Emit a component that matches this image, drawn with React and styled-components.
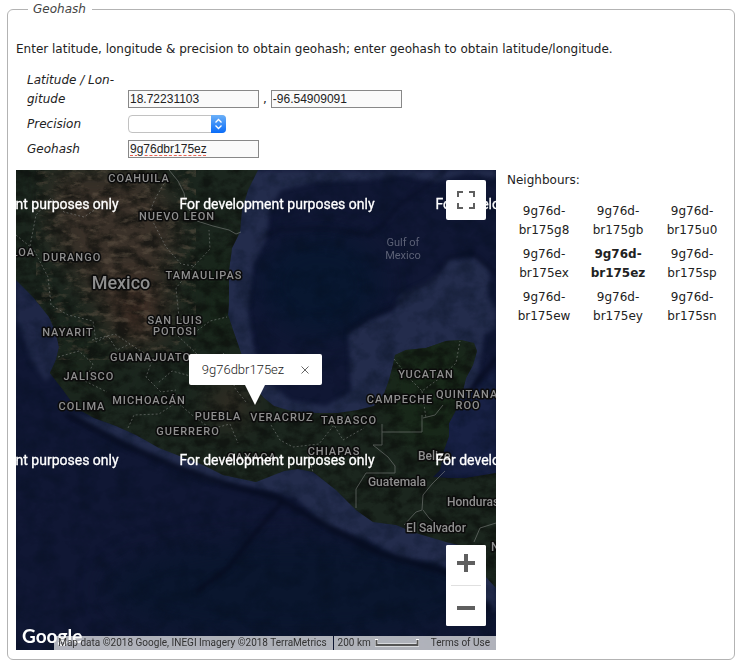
import React from 'react';
import styled, { createGlobalStyle } from 'styled-components';

const GlobalStyle = createGlobalStyle`
  * { box-sizing: border-box; }
  body {
    margin: 0;
    background: #fff;
    color: #222;
    font: 12px/19px Verdana, "DejaVu Sans", sans-serif;
  }
`;

const Page = styled.main`
  padding: 0 10px 6px 7px;
`;

const Panel = styled.fieldset`
  margin: 0;
  min-width: 0;
  border: 1px solid #b3b3b3;
  border-radius: 6px;
  padding: 21px 5px 9px 8px;
`;

const Legend = styled.legend`
  margin-left: 12px;
  padding: 0 6px 0 5px;
  font-style: italic;
  color: #444;
`;

const Intro = styled.p`
  margin: 0 0 12px;
`;

const Form = styled.form`
  display: grid;
  grid-template-columns: 90px 1fr;
  column-gap: 11px;
  row-gap: 6px;
  align-items: end;
  padding-left: 11px;
  margin-bottom: 11px;
`;

const Label = styled.label`
  font-style: italic;
`;

const Controls = styled.div`
  display: flex;
  align-items: flex-start;
  gap: 4px;
  height: 19px;
`;

const TextBox = styled.input`
  width: 131px;
  height: 18px;
  padding: 0 1px;
  border: 1px solid #888;
  border-radius: 0;
  background: #fafafa;
  color: #222;
  font: 12px "Liberation Sans", Arial, sans-serif;
  text-decoration: ${(p) => (p.$misspelt ? 'underline dashed #e8604f 1px' : 'none')};
  text-underline-offset: 2px;
`;

const SelectWrap = styled.span`
  position: relative;
  display: flex;
`;

const Select = styled.select`
  appearance: none;
  width: 98px;
  height: 18px;
  padding: 0 18px 0 6px;
  border: 1px solid #c2c2c2;
  border-radius: 4px;
  background: #fff;
  font: 11px "Liberation Sans", Arial, sans-serif;
`;

const Stepper = styled.span`
  position: absolute;
  top: 0;
  right: 0;
  display: grid;
  place-items: center;
  width: 15px;
  height: 18px;
  border-radius: 0 4px 4px 0;
  background: linear-gradient(#6bb0f8, #0a6cf8);
  pointer-events: none;
`;

const Results = styled.div`
  display: flex;
  align-items: flex-start;
  gap: 11px;
`;

const MapFrame = styled.section`
  position: relative;
  flex: 0 1 480px;
  min-width: 0;
  aspect-ratio: 1;
  overflow: hidden;
  background: #0d1634;
  font-family: Roboto, sans-serif;
`;

const MapDrawing = styled.svg`
  display: block;
  width: 100%;
  height: 100%;
  text {
    font-family: Roboto, sans-serif;
  }
`;

const StateText = styled.text`
  font-size: 11px;
  font-weight: 500;
  letter-spacing: 1px;
  fill: #8f8f8f;
  stroke: #0b0b0b;
  stroke-width: 3px;
  stroke-linejoin: round;
  paint-order: stroke;
  text-anchor: ${(p) => p.$anchor || 'middle'};
`;

const CountryText = styled(StateText)`
  font-size: ${(p) => (p.$large ? 18 : 12)}px;
  letter-spacing: normal;
`;

const SeaText = styled.text`
  font-size: 11px;
  fill: #5b6075;
  text-anchor: middle;
`;

const NoticeText = styled.text`
  font-size: 14px;
  fill: #fff;
  stroke: #fff;
  stroke-width: 0.3px;
  text-anchor: middle;
`;

const MapButton = styled.button`
  display: grid;
  place-items: center;
  width: 40px;
  height: 40px;
  padding: 0;
  border: 0;
  border-radius: 2px;
  background: #fff;
`;

const ZoomInButton = styled(MapButton)`
  padding-bottom: 4px;
`;

const ZoomOutButton = styled(MapButton)`
  padding-top: 4px;
`;

const FullscreenButton = styled(MapButton)`
  position: absolute;
  top: 10px;
  right: 10px;
`;

const Zoom = styled.div`
  position: absolute;
  right: 10px;
  bottom: 24px;
  display: flex;
  flex-direction: column;
  align-items: center;
  border-radius: 2px;
  background: #fff;
`;

const ZoomRule = styled.span`
  width: 30px;
  height: 1px;
  background: #e0e0e0;
`;

const Callout = styled.div`
  position: absolute;
  left: 36%;
  bottom: 51%;
  transform: translateY(-20px);
  display: flex;
  align-items: center;
  gap: 9px;
  height: 31px;
  padding: 0 5px 0 13px;
  border-radius: 2px;
  background: #fff;
  color: #222;
  font-size: 13px;
  font-weight: 300;

  &::after {
    content: '';
    position: absolute;
    top: 100%;
    left: 50%;
    margin-left: -10px;
    border: 10px solid transparent;
    border-top: 20px solid #fff;
    border-bottom: 0;
  }
`;

const CloseButton = styled.button`
  display: grid;
  place-items: center;
  width: 24px;
  height: 24px;
  padding: 0;
  border: 0;
  background: none;
`;

const Brand = styled.a`
  position: absolute;
  left: 6px;
  bottom: 3px;
  color: #fff;
  font: 700 19px/22px Lato, sans-serif;
  text-decoration: none;
`;

const Credits = styled.div`
  position: absolute;
  right: 0;
  bottom: 0;
  display: flex;
  gap: 1px;
  height: 14px;
  color: #333;
  font-size: 10px;
  line-height: 14px;
  white-space: nowrap;
`;

const Credit = styled.div`
  display: flex;
  align-items: center;
  gap: 4px;
  padding: 0 6px 0 4px;
  background: rgba(245, 245, 245, 0.7);
`;

const TermsLink = styled.a`
  margin-left: 8px;
  color: #333;
  text-decoration: none;
`;

const Neighbours = styled.section`
  flex: 1;
  padding-top: 1px;
`;

const Heading = styled.p`
  margin: 0;
`;

const HashTable = styled.table`
  width: 100%;
  max-width: 222px;
  margin-top: 10px;
  border-collapse: collapse;
  table-layout: fixed;
`;

const HashCell = styled.td`
  padding: 2px 0 3px;
  line-height: 19px;
  text-align: center;
  font-weight: ${(p) => (p.$current ? 700 : 400)};
`;

const states = [
  ['COAHUILA', 123, 12], ['NUEVO LEON', 161, 50], ['SINALOA', 19, 86, 'end'],
  ['DURANGO', 56, 91], ['TAMAULIPAS', 188, 109], ['SAN LUIS', 159, 154],
  ['POTOSI', 159, 165], ['NAYARIT', 52, 166], ['GUANAJUATO', 94, 191, 'start'],
  ['JALISCO', 73, 210], ['MICHOACÁN', 133, 234], ['COLIMA', 66, 240],
  ['YUCATAN', 410, 208], ['CAMPECHE', 384, 233], ['QUINTANA', 420, 228, 'start'],
  ['ROO', 452, 239], ['PUEBLA', 202, 250], ['VERACRUZ', 266, 251],
  ['TABASCO', 333, 254], ['GUERRERO', 172, 265], ['OAXACA', 236, 291],
  ['CHIAPAS', 318, 285],
];

const countries = [
  ['Mexico', 105, 119, 'middle', true], ['Belize', 402, 290, 'start'],
  ['Guatemala', 381, 316, 'middle'], ['Honduras', 431, 336, 'start'],
  ['El Salvador', 420, 362, 'middle'], ['Nicaragua', 475, 381, 'start'],
];

const notices = [39, 295].flatMap((y) => [5, 261, 517].map((x) => [x, y]));

const LAND =
  'M0 0H242L232 20 226 40 224 62 216 78 213 100 213 130 212 145 217 160 224 180 232 203 241 220 248 228 258 236 275 241 300 243 322 243 342 240 358 236 368 224 373 210 377 195 379 185 390 180 410 178 430 171 445 170 458 173 461 181 457 195 450 208 446 224 440 240 433 253 433 266 428 280 424 300 417 307 432 308 450 308 480 303V418L470 407 460 392 447 376 430 372 400 363 380 355 357 352 340 340 320 320 297 302 282 299 268 301 240 312 207 305 187 295 143 278 120 265 100 256 78 248 60 238 47 220 34 203 40 190 43 177 40 163 33 147 17 127 0 110Z';

const HASHES = [
  ['g8', 'gb', 'u0'],
  ['ex', 'ez', 'sp'],
  ['ew', 'ey', 'sn'],
];

function SatelliteMap() {
  return (
    <MapDrawing viewBox="0 0 480 480" role="img" aria-label="Satellite map of Mexico">
      <defs>
        <clipPath id="land"><path d={LAND} /></clipPath>
        <filter id="soft" x="-50%" y="-50%" width="200%" height="200%" colorInterpolationFilters="sRGB">
          <feGaussianBlur stdDeviation="14" />
        </filter>
        <filter id="edge" x="-10%" y="-10%" width="120%" height="120%" colorInterpolationFilters="sRGB">
          <feGaussianBlur stdDeviation="2" />
        </filter>
        <filter id="terrain" x="0" y="0" width="100%" height="100%" colorInterpolationFilters="sRGB">
          <feTurbulence type="fractalNoise" baseFrequency="0.07 0.09" numOctaves="5" seed="8" />
          <feColorMatrix values="0 0 0 0 0.04  0 0 0 0 0.05  0 0 0 0 0.04  3 0 0 0 -1.2" />
        </filter>
        <filter id="ridges" x="0" y="0" width="100%" height="100%" colorInterpolationFilters="sRGB">
          <feTurbulence type="fractalNoise" baseFrequency="0.08 0.17" numOctaves="5" seed="21" />
          <feColorMatrix values="0 0 0 0 0.4  0 0 0 0 0.35  0 0 0 0 0.29  0 4 0 0 -2.1" />
        </filter>
        <filter id="seabed" x="0" y="0" width="100%" height="100%" colorInterpolationFilters="sRGB">
          <feTurbulence type="fractalNoise" baseFrequency="0.05 0.06" numOctaves="5" seed="4" />
          <feColorMatrix values="0 0 0 0 0.02  0 0 0 0 0.06  0 0 0 0 0.12  2.4 0 0 0 -1" />
        </filter>
      </defs>

      <rect width="480" height="480" fill="#101734" />
      <ellipse cx="305" cy="115" rx="60" ry="50" fill="#081730" filter="url(#soft)" />
      <ellipse cx="280" cy="420" rx="190" ry="50" fill="#0a162e" filter="url(#soft)" />
      <g filter="url(#edge)" fill="#232c4c">
        <path d="M235 0H480V8L450 3 420 12 385 5 350 10 300 12 265 20 254 38 250 70 237 95 232 140 238 180 250 210 275 231 310 236 335 222 334 190 332 163 352 151 378 141 384 124 408 114 424 102 432 90 460 88 474 101 472 125 480 140V158L468 165 462 205 440 245H255L205 180V40Z" />
        <path d="M0 105 18 120 45 155 50 180 30 212 15 190 5 160 0 150Z" opacity=".8" />
        <path d="M50 242 95 251 145 274 190 291 235 306 280 295 325 315 365 344 430 366 470 400 480 412V445L450 410 420 393 385 388 350 369 310 356 280 328 240 318 195 311 145 290 100 269Z" />
        <path d="M432 245 480 200V305L424 307Z" fill="#182145" />
      </g>
      <rect width="480" height="480" filter="url(#seabed)" opacity=".4" />
      <g fill="none" stroke="#060b1e" filter="url(#edge)">
        <path d="M50 244 105 273 160 297 215 316 260 327 310 356 365 384 430 402 475 440" strokeWidth="6" opacity=".75" />
        <path d="M240 72 260 60 310 58 350 65 365 57 382 36 405 20 430 0M332 162 352 148 380 135 398 119 418 110 432 88 455 82 480 103" strokeWidth="3" opacity=".55" />
        <path d="M266 332 239 363 212 398 180 422M480 188 460 213 445 237" strokeWidth="3" />
      </g>

      <path d={LAND} fill="#1b261e" />
      <g clipPath="url(#land)">
        <g filter="url(#soft)">
          <path d="M35 0H135L165 60 150 100 155 165 125 178 80 135 35 65Z" fill="#3a3129" />
          <ellipse cx="118" cy="140" rx="24" ry="34" fill="#3c2c24" />
          <ellipse cx="214" cy="234" rx="20" ry="24" fill="#332d24" />
          <ellipse cx="60" cy="196" rx="40" ry="22" fill="#1b261c" />
          <ellipse cx="415" cy="220" rx="45" ry="65" fill="#182819" />
          <ellipse cx="203" cy="130" rx="22" ry="60" fill="#18261a" />
        </g>
        <rect width="480" height="480" filter="url(#terrain)" opacity=".6" />
        <path d="M20 0H155L180 100 170 190H110L40 140Z" filter="url(#ridges)" opacity=".45" />
      </g>
      <g fill="none" stroke="#8c8f8d" strokeWidth="1" opacity=".5">
        <path d="M153 0 162 11 168 23 170 35 181 51 197 56 213 60 220 64 225 62M366 254V262H406V245M366 262V275H357L372 287 379 296 379 303H350L340 319V338M429 301 416 314 407 325 406 340 400 342 388 355M407 340 413 348 423 356 443 363M407 248 419 245 427 235M480 353 464 358 458 372" />
        <path strokeDasharray="2 2" d="M14 76 20 45 35 28 48 42 68 47 83 37M0 65 18 80 32 107 35 135 52 145 77 151 80 172 92 166 101 180 114 174M150 10 139 29 133 44 150 77 165 94 178 96 194 79 193 60M178 96 160 118 163 147 178 163 194 151 211 147M162 166 182 185 178 207 156 201 142 213M42 187 63 181 77 194 69 211 91 222M76 170 99 164 120 178 137 188 130 207 145 222 160 220M112 258 118 245 143 244 161 232 176 245 195 259 214 254 222 273M207 183 220 198 218 217 230 232M378 189 394 209 406 221 424 208 440 193 444 171M406 221 410 248M255 255 264 270 277 277 303 274 318 255 327 270 348 258M292 284 297 302" />
      </g>

      {states.map(([name, x, y, anchor]) => (
        <StateText key={name} x={x} y={y} $anchor={anchor}>{name}</StateText>
      ))}
      {countries.map(([name, x, y, anchor, large]) => (
        <CountryText key={name} x={x} y={y} $anchor={anchor} $large={large}>{name}</CountryText>
      ))}
      <SeaText x="387" y="76">Gulf of</SeaText>
      <SeaText x="387" y="89">Mexico</SeaText>
      {notices.map(([x, y]) => (
        <NoticeText key={`${x}-${y}`} x={x} y={y}>For development purposes only</NoticeText>
      ))}
    </MapDrawing>
  );
}

export default function App() {
  return (
    <Page>
      <GlobalStyle />
      <Panel>
        <Legend>Geohash</Legend>
        <Intro>
          Enter latitude, longitude &amp; precision to obtain geohash; enter geohash to obtain latitude/longitude.
        </Intro>
        <Form onSubmit={(e) => e.preventDefault()}>
          <Label htmlFor="lat">Latitude / Lon&shy;gitude</Label>
          <Controls>
            <TextBox id="lat" defaultValue="18.72231103" />
            ,
            <TextBox aria-label="Longitude" defaultValue="-96.54909091" />
          </Controls>
          <Label htmlFor="precision">Precision</Label>
          <Controls>
            <SelectWrap>
              <Select id="precision" defaultValue="">
                <option value="" />
              </Select>
              <Stepper>
                <svg width="9" height="12" viewBox="0 0 9 12" fill="none" stroke="#fff" strokeWidth="1.3" aria-hidden="true">
                  <path d="M1.5 4.5 4.5 1.5 7.5 4.5M1.5 7.5 4.5 10.5 7.5 7.5" />
                </svg>
              </Stepper>
            </SelectWrap>
          </Controls>
          <Label htmlFor="geohash">Geohash</Label>
          <Controls>
            <TextBox id="geohash" defaultValue="9g76dbr175ez" spellCheck={false} $misspelt />
          </Controls>
        </Form>
        <Results>
          <MapFrame>
            <SatelliteMap />
            <Callout>
              9g76dbr175ez
              <CloseButton type="button" aria-label="Close">
                <svg width="8" height="8" viewBox="0 0 8 8" stroke="#666" strokeWidth="1" aria-hidden="true">
                  <path d="M.5.5 7.5 7.5M7.5.5.5 7.5" />
                </svg>
              </CloseButton>
            </Callout>
            <FullscreenButton type="button" aria-label="Toggle fullscreen view">
              <svg width="18" height="18" viewBox="0 0 18 18" fill="none" stroke="#5f5f5f" strokeWidth="2" aria-hidden="true">
                <path d="M1 6V1H6M12 1H17V6M17 12V17H12M6 17H1V12" />
              </svg>
            </FullscreenButton>
            <Zoom>
              <ZoomInButton type="button" aria-label="Zoom in">
                <svg width="18" height="18" viewBox="0 0 18 18" stroke="#5f5f5f" strokeWidth="4" aria-hidden="true">
                  <path d="M0 9H18M9 0V18" />
                </svg>
              </ZoomInButton>
              <ZoomRule />
              <ZoomOutButton type="button" aria-label="Zoom out">
                <svg width="18" height="18" viewBox="0 0 18 18" stroke="#5f5f5f" strokeWidth="4" aria-hidden="true">
                  <path d="M0 9H18" />
                </svg>
              </ZoomOutButton>
            </Zoom>
            <Brand href="#map">Google</Brand>
            <Credits>
              <Credit>Map data ©2018 Google, INEGI Imagery ©2018 TerraMetrics</Credit>
              <Credit>
                200 km
                <svg width="44" height="8" viewBox="0 0 44 8" fill="none" aria-hidden="true">
                  <path d="M1.5 0V6H42.5V0" stroke="#fff" strokeWidth="3" />
                  <path d="M1.5 1V6H42.5V1" stroke="#555" strokeWidth="2" />
                </svg>
                <TermsLink href="#terms">Terms of Use</TermsLink>
              </Credit>
            </Credits>
          </MapFrame>
          <Neighbours>
            <Heading>Neighbours:</Heading>
            <HashTable>
              <tbody>
                {HASHES.map((row) => (
                  <tr key={row[0]}>
                    {row.map((end) => (
                      <HashCell key={end} $current={end === 'ez'}>9g76d&shy;br175{end}</HashCell>
                    ))}
                  </tr>
                ))}
              </tbody>
            </HashTable>
          </Neighbours>
        </Results>
      </Panel>
    </Page>
  );
}
